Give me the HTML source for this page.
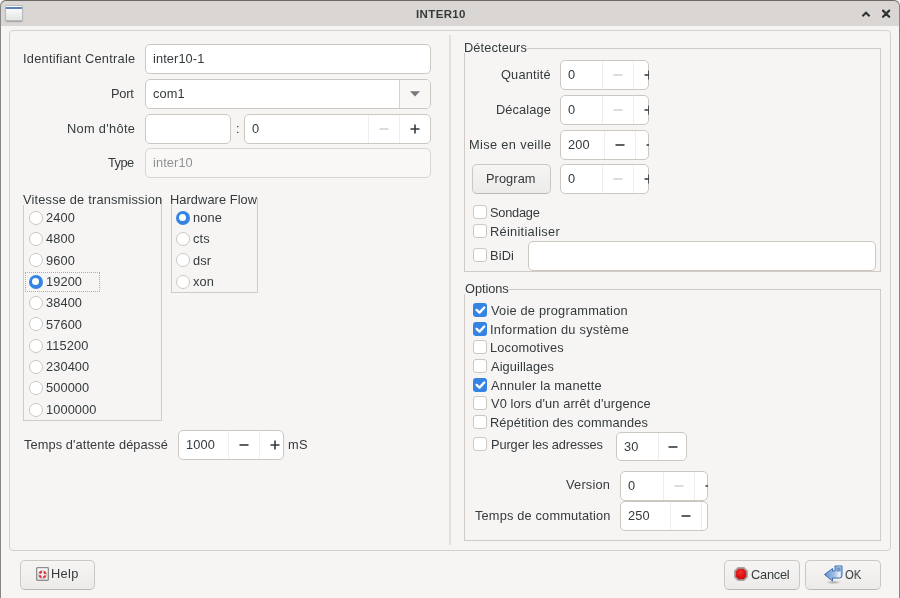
<!DOCTYPE html>
<html><head><meta charset="utf-8"><style>
html,body{margin:0;padding:0;width:900px;height:598px;overflow:hidden;background:#f6f5f4;}
body{position:relative;font-family:"Liberation Sans",sans-serif;font-size:12.8px;letter-spacing:0.1px;color:#353a3c;}
.b{position:absolute;box-sizing:border-box;}
.t{position:absolute;line-height:15px;white-space:nowrap;will-change:transform;}
</style></head><body>
<div class="b" style="left:0;top:0;width:900px;height:26px;background:#dad6d3;border-radius:6px 6px 0 0;"></div>
<div class="b" style="left:0;top:0;width:900px;height:640px;border:1px solid #858585;border-top-color:#6b6967;border-radius:6px 6px 0 0;"></div>
<div class="t" style="top:7px;left:415.80px;font-size:11.5px;letter-spacing:0.367px;font-weight:bold;">INTER10</div>
<div class="b" style="left:5px;top:5px;width:18px;height:16px;border-radius:2px;background:linear-gradient(#fff,#e2e5e3);border:1px solid #b9bcbc;box-shadow:0 1px 1px rgba(0,0,0,.25)"></div>
<div class="b" style="left:6px;top:7px;width:16px;height:2px;background:#5b82bf;"></div>
<svg class="b" style="left:858px;top:8px" width="36" height="13" viewBox="0 0 36 13"><path d="M4.4 8.3 L8 4.7 L11.6 8.3" fill="none" stroke="#2e3436" stroke-width="2"/><path d="M25 2.6 L31.2 8.8 M31.2 2.6 L25 8.8" fill="none" stroke="#2e3436" stroke-width="2.2" stroke-linecap="round"/></svg>
<div class="b" style="left:9px;top:30px;width:882px;height:521px;border:1px solid #d5d0cb;border-radius:4px;"></div>
<div class="b" style="left:449px;top:35px;width:2px;height:510px;background:#e2dfdc;"></div>
<div class="t" style="top:51px;left:23.00px;letter-spacing:0.247px;">Identifiant Centrale</div>
<div class="t" style="top:86px;left:111.30px;letter-spacing:-0.2px;">Port</div>
<div class="t" style="top:121px;left:66.80px;letter-spacing:0.322px;">Nom d'hôte</div>
<div class="t" style="top:155px;left:108.40px;letter-spacing:-0.567px;">Type</div>
<div class="b" style="left:145px;top:44px;width:286px;height:30px;background:#fff;border:1px solid #cdc7c2;border-radius:5px;"></div>
<div class="t" style="top:51px;left:153px;">inter10-1</div>
<div class="b" style="left:145px;top:79px;width:286px;height:30px;background:#fff;border:1px solid #cdc7c2;border-radius:5px;"></div>
<div class="b" style="left:399px;top:80px;width:31px;height:28px;background:#f8f7f6;border-left:1px solid #d6d1cd;border-radius:0 4px 4px 0;"></div>
<svg class="b" style="left:409px;top:90px" width="12" height="8" viewBox="0 0 12 8"><path d="M1 1.3 L11 1.3 L6 6.6 Z" fill="#77797a"/></svg>
<div class="t" style="top:86px;left:153px;">com1</div>
<div class="b" style="left:145px;top:114px;width:86px;height:30px;background:#fff;border:1px solid #cdc7c2;border-radius:5px;"></div>
<div class="t" style="top:121px;left:236px;">:</div>
<div class="b" style="left:244px;top:114px;width:187px;height:30px;background:#fff;border:1px solid #cdc7c2;border-radius:5px;"></div>
<div class="b" style="left:368px;top:115px;width:1px;height:28px;background:#f0eeec;"></div>
<div class="b" style="left:399px;top:115px;width:1px;height:28px;background:#f0eeec;"></div>
<div class="t" style="top:121px;left:252px;">0</div>
<svg class="b" style="left:378.0px;top:122.69999999999999px" width="12" height="12" viewBox="0 0 12 12"><path d="M1.5 6 H10.5" stroke="#d3d4d3" stroke-width="1.6"/></svg>
<div class="b" style="left:399px;top:115px;width:32px;height:28px;overflow:hidden;"><svg class="b" style="left:10px;top:7.699999999999989px" width="12" height="12" viewBox="0 0 12 12"><path d="M1.5 6 H10.5 M6 1.5 V10.5" stroke="#353a3c" stroke-width="1.6"/></svg></div>
<div class="b" style="left:145px;top:148px;width:286px;height:30px;background:#f9f8f7;border:1px solid #d9d5d1;border-radius:5px;"></div>
<div class="t" style="top:155px;left:153px;color:#8e9192;">inter10</div>
<div class="b" style="left:162px;top:198px;width:0px;height:1px;background:#d0cbc7;"></div>
<div class="b" style="left:23px;top:205px;width:1px;height:215px;background:#d0cbc7;"></div>
<div class="b" style="left:161px;top:198px;width:1px;height:223px;background:#d0cbc7;"></div>
<div class="b" style="left:23px;top:420px;width:139px;height:1px;background:#d0cbc7;"></div>
<div class="t" style="top:192px;left:23.20px;letter-spacing:0.191px;">Vitesse de transmission</div>
<div class="b" style="left:28.5px;top:210.5px;width:14px;height:14px;border-radius:50%;background:#fff;border:1px solid #cdc7c2;"></div>
<div class="t" style="top:210px;left:46px;">2400</div>
<div class="b" style="left:28.5px;top:232.0px;width:14px;height:14px;border-radius:50%;background:#fff;border:1px solid #cdc7c2;"></div>
<div class="t" style="top:231px;left:46px;">4800</div>
<div class="b" style="left:28.5px;top:253.0px;width:14px;height:14px;border-radius:50%;background:#fff;border:1px solid #cdc7c2;"></div>
<div class="t" style="top:253px;left:46px;">9600</div>
<div class="b" style="left:28.5px;top:274.5px;width:14px;height:14px;border-radius:50%;background:#3584e4;"></div>
<div class="b" style="left:32.0px;top:278.0px;width:7px;height:7px;border-radius:50%;background:#fff;"></div>
<div class="t" style="top:274px;left:46px;">19200</div>
<div class="b" style="left:28.5px;top:295.5px;width:14px;height:14px;border-radius:50%;background:#fff;border:1px solid #cdc7c2;"></div>
<div class="t" style="top:295px;left:46px;">38400</div>
<div class="b" style="left:28.5px;top:317.0px;width:14px;height:14px;border-radius:50%;background:#fff;border:1px solid #cdc7c2;"></div>
<div class="t" style="top:317px;left:46px;">57600</div>
<div class="b" style="left:28.5px;top:338.5px;width:14px;height:14px;border-radius:50%;background:#fff;border:1px solid #cdc7c2;"></div>
<div class="t" style="top:338px;left:46px;">115200</div>
<div class="b" style="left:28.5px;top:359.5px;width:14px;height:14px;border-radius:50%;background:#fff;border:1px solid #cdc7c2;"></div>
<div class="t" style="top:359px;left:46px;">230400</div>
<div class="b" style="left:28.5px;top:381.0px;width:14px;height:14px;border-radius:50%;background:#fff;border:1px solid #cdc7c2;"></div>
<div class="t" style="top:380px;left:46px;">500000</div>
<div class="b" style="left:28.5px;top:402.5px;width:14px;height:14px;border-radius:50%;background:#fff;border:1px solid #cdc7c2;"></div>
<div class="t" style="top:402px;left:46px;">1000000</div>
<div class="b" style="left:25px;top:272px;width:75px;height:20px;border:1px dotted #b0aeac;"></div>
<div class="b" style="left:258px;top:198px;width:0px;height:1px;background:#d0cbc7;"></div>
<div class="b" style="left:171px;top:205px;width:1px;height:87px;background:#d0cbc7;"></div>
<div class="b" style="left:257px;top:198px;width:1px;height:95px;background:#d0cbc7;"></div>
<div class="b" style="left:171px;top:292px;width:87px;height:1px;background:#d0cbc7;"></div>
<div class="t" style="top:192px;left:170.00px;letter-spacing:0.083px;">Hardware Flow</div>
<div class="b" style="left:175.5px;top:210.5px;width:14px;height:14px;border-radius:50%;background:#3584e4;"></div>
<div class="b" style="left:179.0px;top:214.0px;width:7px;height:7px;border-radius:50%;background:#fff;"></div>
<div class="t" style="top:210px;left:193px;">none</div>
<div class="b" style="left:175.5px;top:232.0px;width:14px;height:14px;border-radius:50%;background:#fff;border:1px solid #cdc7c2;"></div>
<div class="t" style="top:231px;left:193px;">cts</div>
<div class="b" style="left:175.5px;top:253.0px;width:14px;height:14px;border-radius:50%;background:#fff;border:1px solid #cdc7c2;"></div>
<div class="t" style="top:253px;left:193px;">dsr</div>
<div class="b" style="left:175.5px;top:274.5px;width:14px;height:14px;border-radius:50%;background:#fff;border:1px solid #cdc7c2;"></div>
<div class="t" style="top:274px;left:193px;">xon</div>
<div class="t" style="top:437px;left:23.50px;letter-spacing:0.091px;">Temps d'attente dépassé</div>
<div class="b" style="left:178px;top:430px;width:106px;height:30px;background:#fff;border:1px solid #cdc7c2;border-radius:5px;"></div>
<div class="b" style="left:228px;top:431px;width:1px;height:28px;background:#f0eeec;"></div>
<div class="b" style="left:259px;top:431px;width:1px;height:28px;background:#f0eeec;"></div>
<div class="t" style="top:437px;left:186px;">1000</div>
<svg class="b" style="left:238.0px;top:438.7px" width="12" height="12" viewBox="0 0 12 12"><path d="M1.5 6 H10.5" stroke="#353a3c" stroke-width="1.6"/></svg>
<div class="b" style="left:259px;top:431px;width:25px;height:28px;overflow:hidden;"><svg class="b" style="left:10px;top:7.699999999999989px" width="12" height="12" viewBox="0 0 12 12"><path d="M1.5 6 H10.5 M6 1.5 V10.5" stroke="#353a3c" stroke-width="1.6"/></svg></div>
<div class="t" style="top:437px;left:287.70px;letter-spacing:0.3px;">mS</div>
<div class="b" style="left:527px;top:48px;width:354px;height:1px;background:#d0cbc7;"></div>
<div class="b" style="left:464px;top:53px;width:1px;height:218px;background:#d0cbc7;"></div>
<div class="b" style="left:880px;top:48px;width:1px;height:224px;background:#d0cbc7;"></div>
<div class="b" style="left:464px;top:271px;width:417px;height:1px;background:#d0cbc7;"></div>
<div class="t" style="top:40px;left:463.80px;letter-spacing:0.111px;">Détecteurs</div>
<div class="t" style="top:67px;left:501.00px;letter-spacing:0.171px;">Quantité</div>
<div class="b" style="left:560px;top:60px;width:89px;height:30px;background:#fff;border:1px solid #cdc7c2;border-radius:5px;"></div>
<div class="b" style="left:602px;top:61px;width:1px;height:28px;background:#f0eeec;"></div>
<div class="b" style="left:633px;top:61px;width:1px;height:28px;background:#f0eeec;"></div>
<div class="t" style="top:67px;left:568px;">0</div>
<svg class="b" style="left:612.0px;top:68.7px" width="12" height="12" viewBox="0 0 12 12"><path d="M1.5 6 H10.5" stroke="#d3d4d3" stroke-width="1.6"/></svg>
<div class="b" style="left:633px;top:61px;width:16px;height:28px;overflow:hidden;"><svg class="b" style="left:9.5px;top:7.700000000000003px" width="12" height="12" viewBox="0 0 12 12"><path d="M1.5 6 H10.5 M6 1.5 V10.5" stroke="#353a3c" stroke-width="1.6"/></svg></div>
<div class="t" style="top:102px;left:495.50px;letter-spacing:0.1px;">Décalage</div>
<div class="b" style="left:560px;top:95px;width:89px;height:30px;background:#fff;border:1px solid #cdc7c2;border-radius:5px;"></div>
<div class="b" style="left:602px;top:96px;width:1px;height:28px;background:#f0eeec;"></div>
<div class="b" style="left:633px;top:96px;width:1px;height:28px;background:#f0eeec;"></div>
<div class="t" style="top:102px;left:568px;">0</div>
<svg class="b" style="left:612.0px;top:103.7px" width="12" height="12" viewBox="0 0 12 12"><path d="M1.5 6 H10.5" stroke="#d3d4d3" stroke-width="1.6"/></svg>
<div class="b" style="left:633px;top:96px;width:16px;height:28px;overflow:hidden;"><svg class="b" style="left:9.5px;top:7.700000000000003px" width="12" height="12" viewBox="0 0 12 12"><path d="M1.5 6 H10.5 M6 1.5 V10.5" stroke="#353a3c" stroke-width="1.6"/></svg></div>
<div class="t" style="top:137px;left:468.70px;letter-spacing:0.346px;">Mise en veille</div>
<div class="b" style="left:560px;top:130px;width:89px;height:30px;background:#fff;border:1px solid #cdc7c2;border-radius:5px;"></div>
<div class="b" style="left:604px;top:131px;width:1px;height:28px;background:#f0eeec;"></div>
<div class="b" style="left:635px;top:131px;width:1px;height:28px;background:#f0eeec;"></div>
<div class="t" style="top:137px;left:568px;">200</div>
<svg class="b" style="left:614.0px;top:138.7px" width="12" height="12" viewBox="0 0 12 12"><path d="M1.5 6 H10.5" stroke="#353a3c" stroke-width="1.6"/></svg>
<div class="b" style="left:635px;top:131px;width:14px;height:28px;overflow:hidden;"><svg class="b" style="left:9.5px;top:7.699999999999989px" width="12" height="12" viewBox="0 0 12 12"><path d="M1.5 6 H10.5 M6 1.5 V10.5" stroke="#353a3c" stroke-width="1.6"/></svg></div>
<div class="b" style="left:560px;top:164px;width:89px;height:30px;background:#fff;border:1px solid #cdc7c2;border-radius:5px;"></div>
<div class="b" style="left:602px;top:165px;width:1px;height:28px;background:#f0eeec;"></div>
<div class="b" style="left:633px;top:165px;width:1px;height:28px;background:#f0eeec;"></div>
<div class="t" style="top:171px;left:568px;">0</div>
<svg class="b" style="left:612.0px;top:172.7px" width="12" height="12" viewBox="0 0 12 12"><path d="M1.5 6 H10.5" stroke="#d3d4d3" stroke-width="1.6"/></svg>
<div class="b" style="left:633px;top:165px;width:16px;height:28px;overflow:hidden;"><svg class="b" style="left:9.5px;top:7.699999999999989px" width="12" height="12" viewBox="0 0 12 12"><path d="M1.5 6 H10.5 M6 1.5 V10.5" stroke="#353a3c" stroke-width="1.6"/></svg></div>
<div class="b" style="left:472px;top:164px;width:79px;height:30px;background:linear-gradient(#f6f5f4,#edebe9);border:1px solid #cdc7c2;border-bottom-color:#bfb8b1;border-radius:5px;"></div>
<div class="t" style="top:171px;left:486.20px;letter-spacing:0.067px;">Program</div>
<div class="b" style="left:473px;top:205px;width:14px;height:14px;border-radius:3px;background:#fff;border:1px solid #cdc7c2;"></div>
<div class="t" style="top:205px;left:490.40px;letter-spacing:-0.233px;">Sondage</div>
<div class="b" style="left:473px;top:224px;width:14px;height:14px;border-radius:3px;background:#fff;border:1px solid #cdc7c2;"></div>
<div class="t" style="top:224px;left:490.40px;letter-spacing:0.292px;">Réinitialiser</div>
<div class="b" style="left:473px;top:248px;width:14px;height:14px;border-radius:3px;background:#fff;border:1px solid #cdc7c2;"></div>
<div class="t" style="top:248px;left:490.40px;letter-spacing:0.167px;">BiDi</div>
<div class="b" style="left:528px;top:241px;width:348px;height:30px;background:#fff;border:1px solid #cdc7c2;border-radius:5px;"></div>
<div class="b" style="left:508px;top:289px;width:373px;height:1px;background:#d0cbc7;"></div>
<div class="b" style="left:464px;top:294px;width:1px;height:246px;background:#d0cbc7;"></div>
<div class="b" style="left:880px;top:289px;width:1px;height:252px;background:#d0cbc7;"></div>
<div class="b" style="left:464px;top:540px;width:417px;height:1px;background:#d0cbc7;"></div>
<div class="t" style="top:281px;left:464.90px;letter-spacing:-0.067px;">Options</div>
<div class="b" style="left:473px;top:303px;width:14px;height:14px;border-radius:3px;background:#3584e4;"></div>
<svg class="b" style="left:473px;top:303px" width="14" height="14" viewBox="0 0 14 14"><path d="M3.6 6.9 L6.5 9.6 L11.3 4.5" fill="none" stroke="#fff" stroke-width="2.4" stroke-linecap="round" stroke-linejoin="round"/></svg>
<div class="t" style="top:303px;left:491.10px;letter-spacing:0.215px;">Voie de programmation</div>
<div class="b" style="left:473px;top:322px;width:14px;height:14px;border-radius:3px;background:#3584e4;"></div>
<svg class="b" style="left:473px;top:322px" width="14" height="14" viewBox="0 0 14 14"><path d="M3.6 6.9 L6.5 9.6 L11.3 4.5" fill="none" stroke="#fff" stroke-width="2.4" stroke-linecap="round" stroke-linejoin="round"/></svg>
<div class="t" style="top:322px;left:490.10px;letter-spacing:0.276px;">Information du système</div>
<div class="b" style="left:473px;top:340px;width:14px;height:14px;border-radius:3px;background:#fff;border:1px solid #cdc7c2;"></div>
<div class="t" style="top:340px;left:490.10px;letter-spacing:0.18px;">Locomotives</div>
<div class="b" style="left:473px;top:359px;width:14px;height:14px;border-radius:3px;background:#fff;border:1px solid #cdc7c2;"></div>
<div class="t" style="top:359px;left:491.10px;letter-spacing:0.1px;">Aiguillages</div>
<div class="b" style="left:473px;top:378px;width:14px;height:14px;border-radius:3px;background:#3584e4;"></div>
<svg class="b" style="left:473px;top:378px" width="14" height="14" viewBox="0 0 14 14"><path d="M3.6 6.9 L6.5 9.6 L11.3 4.5" fill="none" stroke="#fff" stroke-width="2.4" stroke-linecap="round" stroke-linejoin="round"/></svg>
<div class="t" style="top:378px;left:491.10px;letter-spacing:0.188px;">Annuler la manette</div>
<div class="b" style="left:473px;top:396px;width:14px;height:14px;border-radius:3px;background:#fff;border:1px solid #cdc7c2;"></div>
<div class="t" style="top:396px;left:491.10px;letter-spacing:0.115px;">V0 lors d'un arrêt d'urgence</div>
<div class="b" style="left:473px;top:415px;width:14px;height:14px;border-radius:3px;background:#fff;border:1px solid #cdc7c2;"></div>
<div class="t" style="top:415px;left:490.10px;letter-spacing:0.126px;">Répétition des commandes</div>
<div class="b" style="left:473px;top:437px;width:14px;height:14px;border-radius:3px;background:#fff;border:1px solid #cdc7c2;"></div>
<div class="t" style="top:437px;left:490.70px;letter-spacing:-0.1px;">Purger les adresses</div>
<div class="b" style="left:616px;top:432px;width:71px;height:29px;background:#fff;border:1px solid #cdc7c2;border-radius:5px;"></div>
<div class="b" style="left:658px;top:433px;width:1px;height:27px;background:#f0eeec;"></div>
<div class="t" style="top:439px;left:624px;">30</div>
<svg class="b" style="left:667px;top:441px" width="12" height="12" viewBox="0 0 12 12"><path d="M1.5 6 H10.5" stroke="#353a3c" stroke-width="1.6"/></svg>
<div class="t" style="top:477px;left:566.40px;letter-spacing:0.217px;">Version</div>
<div class="b" style="left:620px;top:471px;width:88px;height:30px;background:#fff;border:1px solid #cdc7c2;border-radius:5px;"></div>
<div class="b" style="left:663px;top:472px;width:1px;height:28px;background:#f0eeec;"></div>
<div class="b" style="left:694px;top:472px;width:1px;height:28px;background:#f0eeec;"></div>
<div class="t" style="top:478px;left:628px;">0</div>
<svg class="b" style="left:673.0px;top:479.7px" width="12" height="12" viewBox="0 0 12 12"><path d="M1.5 6 H10.5" stroke="#d3d4d3" stroke-width="1.6"/></svg>
<div class="b" style="left:694px;top:472px;width:14px;height:28px;overflow:hidden;"><svg class="b" style="left:10px;top:7.699999999999989px" width="12" height="12" viewBox="0 0 12 12"><path d="M1.5 6 H10.5 M6 1.5 V10.5" stroke="#353a3c" stroke-width="1.6"/></svg></div>
<div class="t" style="top:508px;left:474.50px;letter-spacing:0.168px;">Temps de commutation</div>
<div class="b" style="left:620px;top:501px;width:88px;height:30px;background:#fff;border:1px solid #cdc7c2;border-radius:5px;"></div>
<div class="b" style="left:670px;top:502px;width:1px;height:28px;background:#f0eeec;"></div>
<div class="b" style="left:701px;top:502px;width:1px;height:28px;background:#f0eeec;"></div>
<div class="t" style="top:508px;left:628px;">250</div>
<svg class="b" style="left:680px;top:510px" width="12" height="12" viewBox="0 0 12 12"><path d="M1.5 6 H10.5" stroke="#353a3c" stroke-width="1.6"/></svg>
<div class="b" style="left:20px;top:560px;width:75px;height:30px;background:linear-gradient(#f6f5f4,#edebe9);border:1px solid #cdc7c2;border-bottom-color:#bfb8b1;border-radius:5px;"></div>
<div class="t" style="top:566px;left:51.00px;letter-spacing:0.333px;">Help</div>
<svg class="b" style="left:36px;top:567px" width="13" height="14" viewBox="0 0 13 14"><defs><linearGradient id="hg" x1="0" y1="0" x2="0" y2="1"><stop offset="0" stop-color="#fdfdfd"/><stop offset="1" stop-color="#e4e4e4"/></linearGradient></defs><rect x="0.65" y="0.65" width="11.7" height="12.7" rx="0.8" fill="url(#hg)" stroke="#8d8d8d" stroke-width="1.3"/><circle cx="6.5" cy="7.6" r="3.9" fill="none" stroke="#b5b5b5" stroke-width="0.8"/><circle cx="6.5" cy="7.6" r="3" fill="none" stroke="#dc3b3f" stroke-width="2.2" stroke-dasharray="2.9 1.81" stroke-dashoffset="-0.9"/></svg>
<div class="b" style="left:724px;top:560px;width:76px;height:30px;background:linear-gradient(#f6f5f4,#edebe9);border:1px solid #cdc7c2;border-bottom-color:#bfb8b1;border-radius:5px;"></div>
<svg class="b" style="left:733.7px;top:566.5px" width="14" height="14" viewBox="0 0 14 14"><defs><radialGradient id="rg" cx="0.45" cy="0.35" r="0.7"><stop offset="0" stop-color="#f03030"/><stop offset="1" stop-color="#c80000"/></radialGradient></defs><path d="M4.1 0.9 H9.9 L13.1 4.1 V9.9 L9.9 13.1 H4.1 L0.9 9.9 V4.1 Z" fill="url(#rg)" stroke="#a3a5a3" stroke-width="1.7"/></svg>
<div class="t" style="top:567px;left:750.60px;letter-spacing:-0.24px;">Cancel</div>
<div class="b" style="left:805px;top:560px;width:76px;height:30px;background:linear-gradient(#f6f5f4,#edebe9);border:1px solid #cdc7c2;border-bottom-color:#bfb8b1;border-radius:5px;"></div>
<svg class="b" style="left:820px;top:560px" width="26" height="26" viewBox="0 0 26 26"><defs><linearGradient id="g1" x1="0" y1="0" x2="1" y2="0"><stop offset="0" stop-color="#5f8ecf"/><stop offset="0.6" stop-color="#a9c4e8"/><stop offset="0.85" stop-color="#eef3fa"/><stop offset="1" stop-color="#9dbbe3"/></linearGradient><radialGradient id="sh"><stop offset="0" stop-color="#000" stop-opacity="0.3"/><stop offset="1" stop-color="#000" stop-opacity="0"/></radialGradient></defs><ellipse cx="13.5" cy="22.3" rx="8" ry="2" fill="url(#sh)"/><path d="M4.5 14.5 L12.5 8.5 V11 H15 V6 H22 V15.5 Q22 18 19.5 18 H12.5 V21 Z" fill="url(#g1)" stroke="#3c6cae" stroke-width="1" stroke-linejoin="round"/><rect x="16.3" y="7.3" width="4.4" height="4.2" fill="#6f98cf"/></svg>
<div class="t" style="top:567px;left:844.60px;letter-spacing:0px;transform:scaleX(0.878);transform-origin:0 0;">OK</div>
</body></html>
